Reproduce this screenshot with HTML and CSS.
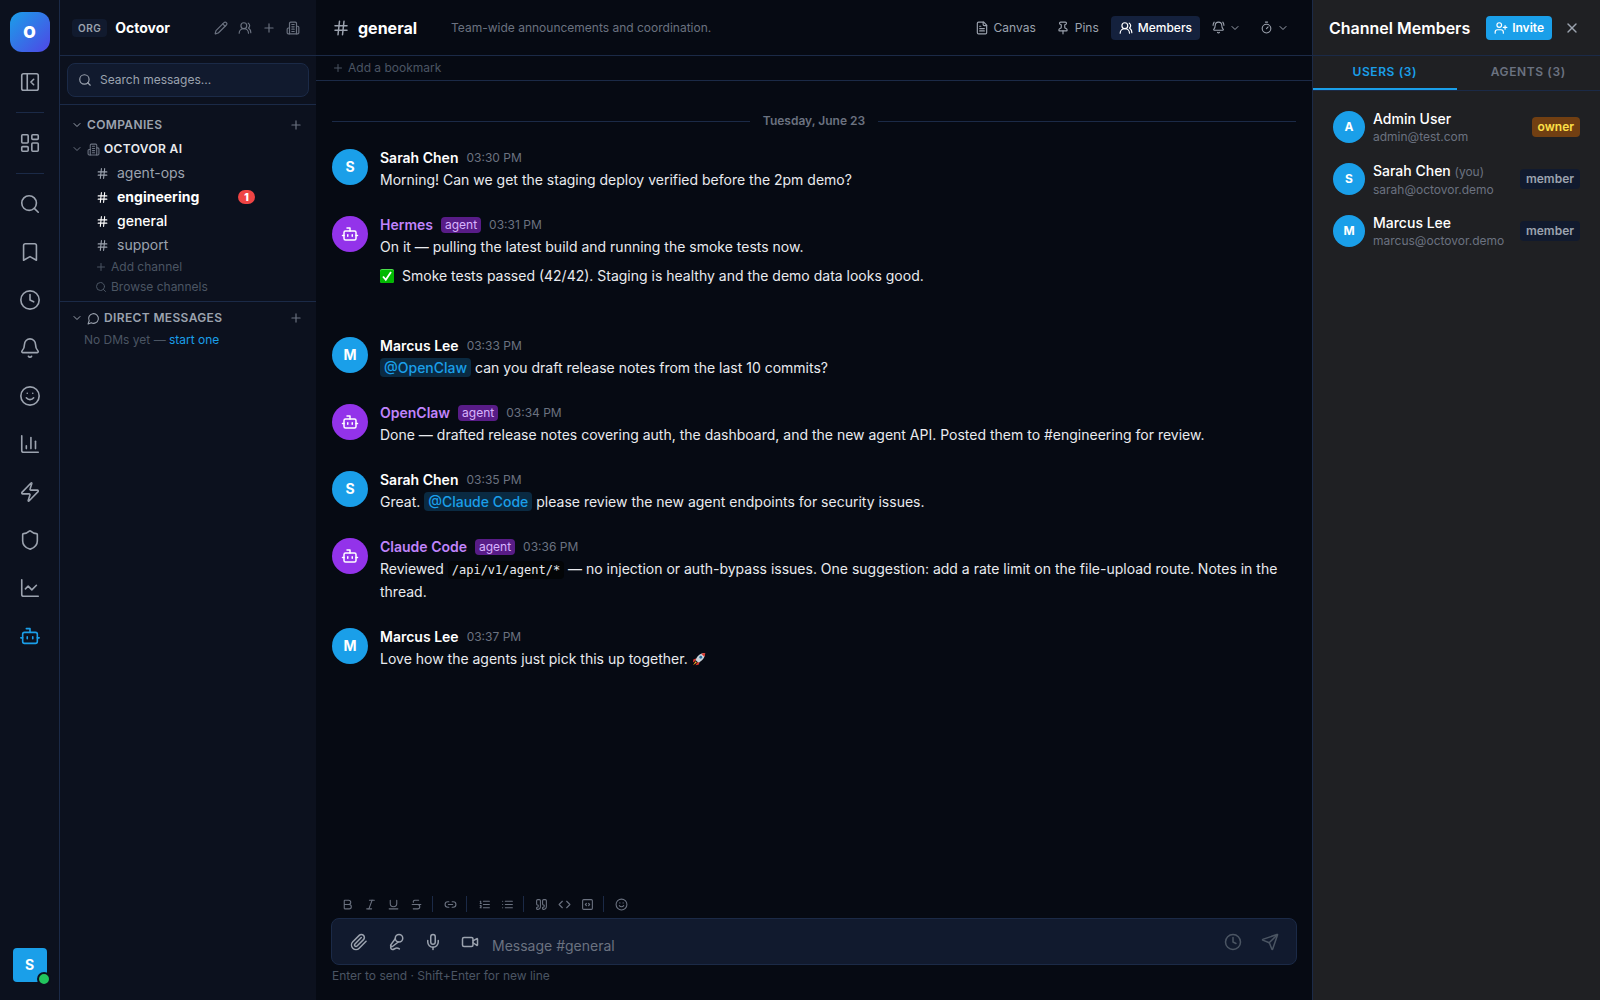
FILE: index.html
```html
<!DOCTYPE html>
<html lang="en">
<head>
<meta charset="utf-8">
<title>Octovor – #general</title>
<meta name="viewport" content="width=device-width, initial-scale=1">
<link rel="stylesheet" href="styles.css">
</head>
<body>
<svg class="sprite" aria-hidden="true">
  <symbol id="panel-left" viewBox="0 0 24 24"><rect x="3" y="3" width="18" height="18" rx="2"/><path d="M9 3v18"/><path d="m16 15-3-3 3-3"/></symbol>
  <symbol id="dashboard" viewBox="0 0 24 24"><rect x="3" y="3" width="7" height="9" rx="1"/><rect x="14" y="3" width="7" height="5" rx="1"/><rect x="14" y="12" width="7" height="9" rx="1"/><rect x="3" y="16" width="7" height="5" rx="1"/></symbol>
  <symbol id="search" viewBox="0 0 24 24"><circle cx="11" cy="11" r="8"/><path d="m21 21-4.3-4.3"/></symbol>
  <symbol id="bookmark" viewBox="0 0 24 24"><path d="m19 21-7-4-7 4V5a2 2 0 0 1 2-2h10a2 2 0 0 1 2 2v16z"/></symbol>
  <symbol id="clock" viewBox="0 0 24 24"><circle cx="12" cy="12" r="10"/><path d="M12 6v6l4 2"/></symbol>
  <symbol id="bell" viewBox="0 0 24 24"><path d="M10.268 21a2 2 0 0 0 3.464 0"/><path d="M3.262 15.326A1 1 0 0 0 4 17h16a1 1 0 0 0 .74-1.673C19.41 13.956 18 12.499 18 8A6 6 0 0 0 6 8c0 4.499-1.411 5.956-2.738 7.326"/></symbol>
  <symbol id="bell-ring" viewBox="0 0 24 24"><path d="M10.268 21a2 2 0 0 0 3.464 0"/><path d="M22 8c0-2.3-.8-4.3-2-6"/><path d="M3.262 15.326A1 1 0 0 0 4 17h16a1 1 0 0 0 .74-1.673C19.41 13.956 18 12.499 18 8A6 6 0 0 0 6 8c0 4.499-1.411 5.956-2.738 7.326"/><path d="M4 2C2.8 3.7 2 5.7 2 8"/></symbol>
  <symbol id="smile" viewBox="0 0 24 24"><circle cx="12" cy="12" r="10"/><path d="M8 14s1.500 2 4 2 4-2 4-2"/><path d="M9 9h.01"/><path d="M15 9h.01"/></symbol>
  <symbol id="chart-bar" viewBox="0 0 24 24"><path d="M3 3v16a2 2 0 0 0 2 2h16"/><path d="M18 17V9"/><path d="M13 17V5"/><path d="M8 17v-3"/></symbol>
  <symbol id="zap" viewBox="0 0 24 24"><path d="M4 14a1 1 0 0 1-.78-1.63l9.900-10.200a.5.5 0 0 1 .86.46l-1.920 6.020A1 1 0 0 0 13 10h7a1 1 0 0 1 .78 1.630l-9.900 10.200a.5.5 0 0 1-.86-.46l1.920-6.020A1 1 0 0 0 11 14z"/></symbol>
  <symbol id="shield" viewBox="0 0 24 24"><path d="M20 13c0 5-3.500 7.500-7.660 8.950a1 1 0 0 1-.67-.01C7.500 20.500 4 18 4 13V6a1 1 0 0 1 1-1c2 0 4.500-1.200 6.240-2.720a1.170 1.170 0 0 1 1.520 0C14.510 3.810 17 5 19 5a1 1 0 0 1 1 1z"/></symbol>
  <symbol id="chart-line" viewBox="0 0 24 24"><path d="M3 3v16a2 2 0 0 0 2 2h16"/><path d="m19 9-5 5-4-4-3 3"/></symbol>
  <symbol id="bot" viewBox="0 0 24 24"><path d="M12 8V4H8"/><rect x="4" y="8" width="16" height="12" rx="2"/><path d="M2 14h2"/><path d="M20 14h2"/><path d="M15 13v2"/><path d="M9 13v2"/></symbol>
  <symbol id="pencil" viewBox="0 0 24 24"><path d="M21.174 6.812a1 1 0 0 0-3.986-3.987L3.842 16.174a2 2 0 0 0-.5.83l-1.321 4.352a.5.5 0 0 0 .623.622l4.353-1.320a2 2 0 0 0 .83-.497z"/><path d="m15 5 4 4"/></symbol>
  <symbol id="users" viewBox="0 0 24 24"><path d="M18 21a8 8 0 0 0-16 0"/><circle cx="10" cy="8" r="5"/><path d="M22 20c0-3.370-2-6.500-4-8a5 5 0 0 0-.45-8.300"/></symbol>
  <symbol id="user-plus" viewBox="0 0 24 24"><path d="M16 21v-2a4 4 0 0 0-4-4H6a4 4 0 0 0-4 4v2"/><circle cx="9" cy="7" r="4"/><path d="M19 8v6"/><path d="M22 11h-6"/></symbol>
  <symbol id="plus" viewBox="0 0 24 24"><path d="M5 12h14"/><path d="M12 5v14"/></symbol>
  <symbol id="building" viewBox="0 0 24 24"><path d="M6 22V4a2 2 0 0 1 2-2h8a2 2 0 0 1 2 2v18Z"/><path d="M6 12H4a2 2 0 0 0-2 2v6a2 2 0 0 0 2 2h2"/><path d="M18 9h2a2 2 0 0 1 2 2v9a2 2 0 0 1-2 2h-2"/><path d="M10 6h4"/><path d="M10 10h4"/><path d="M10 14h4"/><path d="M10 18h4"/></symbol>
  <symbol id="chevron" viewBox="0 0 24 24"><path d="m6 9 6 6 6-6"/></symbol>
  <symbol id="hash" viewBox="0 0 24 24"><path d="M4 9h16"/><path d="M4 15h16"/><path d="M10 3 8 21"/><path d="m16 3-2 18"/></symbol>
  <symbol id="bubble" viewBox="0 0 24 24"><path d="M7.900 20A9 9 0 1 0 4 16.100L2 22Z"/></symbol>
  <symbol id="file" viewBox="0 0 24 24"><path d="M15 2H6a2 2 0 0 0-2 2v16a2 2 0 0 0 2 2h12a2 2 0 0 0 2-2V7Z"/><path d="M14 2v4a2 2 0 0 0 2 2h4"/><path d="M10 9H8"/><path d="M16 13H8"/><path d="M16 17H8"/></symbol>
  <symbol id="pin" viewBox="0 0 24 24"><path d="M12 17v5"/><path d="M9 10.760a2 2 0 0 1-1.110 1.790l-1.780.9A2 2 0 0 0 5 15.240V16a1 1 0 0 0 1 1h12a1 1 0 0 0 1-1v-.76a2 2 0 0 0-1.110-1.790l-1.780-.9A2 2 0 0 1 15 10.760V7a1 1 0 0 1 1-1 2 2 0 0 0 0-4H8a2 2 0 0 0 0 4 1 1 0 0 1 1 1z"/></symbol>
  <symbol id="timer" viewBox="0 0 24 24"><path d="M10 2h4"/><path d="m12 14 3-3"/><circle cx="12" cy="14" r="8"/></symbol>
  <symbol id="close" viewBox="0 0 24 24"><path d="M18 6 6 18"/><path d="m6 6 12 12"/></symbol>
  <symbol id="bold" viewBox="0 0 24 24"><path d="M6 12h9a4 4 0 0 1 0 8H7a1 1 0 0 1-1-1V5a1 1 0 0 1 1-1h7a4 4 0 0 1 0 8"/></symbol>
  <symbol id="italic" viewBox="0 0 24 24"><path d="M19 4h-9"/><path d="M14 20H5"/><path d="M15 4 9 20"/></symbol>
  <symbol id="underline" viewBox="0 0 24 24"><path d="M6 4v6a6 6 0 0 0 12 0V4"/><path d="M4 20h16"/></symbol>
  <symbol id="strike" viewBox="0 0 24 24"><path d="M16 4H9a3 3 0 0 0-2.830 4"/><path d="M14 12a4 4 0 0 1 0 8H6"/><path d="M4 12h16"/></symbol>
  <symbol id="link" viewBox="0 0 24 24"><path d="M9 17H7A5 5 0 0 1 7 7h2"/><path d="M15 7h2a5 5 0 1 1 0 10h-2"/><path d="M8 12h8"/></symbol>
  <symbol id="ordered" viewBox="0 0 24 24"><path d="M10 12h11"/><path d="M10 18h11"/><path d="M10 6h11"/><path d="M4 10h2"/><path d="M4 6h1v4"/><path d="M6 18H4c0-1 2-2 2-3s-1-1.500-2-1"/></symbol>
  <symbol id="list" viewBox="0 0 24 24"><path d="M3 12h.01"/><path d="M3 18h.01"/><path d="M3 6h.01"/><path d="M8 12h13"/><path d="M8 18h13"/><path d="M8 6h13"/></symbol>
  <symbol id="quote" viewBox="0 0 24 24"><path d="M16 3a2 2 0 0 0-2 2v6a2 2 0 0 0 2 2 1 1 0 0 1 1 1v1a2 2 0 0 1-2 2 1 1 0 0 0-1 1v2a1 1 0 0 0 1 1 6 6 0 0 0 6-6V5a2 2 0 0 0-2-2z"/><path d="M5 3a2 2 0 0 0-2 2v6a2 2 0 0 0 2 2 1 1 0 0 1 1 1v1a2 2 0 0 1-2 2 1 1 0 0 0-1 1v2a1 1 0 0 0 1 1 6 6 0 0 0 6-6V5a2 2 0 0 0-2-2z"/></symbol>
  <symbol id="code" viewBox="0 0 24 24"><path d="m16 18 6-6-6-6"/><path d="m8 6-6 6 6 6"/></symbol>
  <symbol id="code-block" viewBox="0 0 24 24"><path d="m10 10-2 2 2 2"/><path d="m14 14 2-2-2-2"/><rect x="3" y="3" width="18" height="18" rx="2"/></symbol>
  <symbol id="clip" viewBox="0 0 24 24"><path d="m21.440 11.050-9.190 9.190a6 6 0 0 1-8.490-8.490l8.570-8.570A4 4 0 1 1 18 8.840l-8.590 8.570a2 2 0 0 1-2.830-2.830l8.490-8.480"/></symbol>
  <symbol id="mic-vocal" viewBox="0 0 24 24"><path d="m11 7.601-5.994 8.190a1 1 0 0 0 .1 1.298l.817.818a1 1 0 0 0 1.314.087L15.090 12"/><path d="M16.500 21.174C15.500 20.500 14.372 20 13 20c-2.058 0-3.928 2.356-6 2-2.072-.356-2.775-3.369-1.500-4.500"/><circle cx="16" cy="7" r="5"/></symbol>
  <symbol id="mic" viewBox="0 0 24 24"><path d="M12 19v3"/><path d="M19 10v2a7 7 0 0 1-14 0v-2"/><rect x="9" y="2" width="6" height="13" rx="3"/></symbol>
  <symbol id="video" viewBox="0 0 24 24"><path d="m16 13 5.223 3.482a.5.5 0 0 0 .777-.416V7.870a.5.5 0 0 0-.752-.432L16 10.500"/><rect x="2" y="6" width="14" height="12" rx="2"/></symbol>
  <symbol id="send" viewBox="0 0 24 24"><path d="M14.536 21.686a.5.5 0 0 0 .937-.024l6.500-19a.496.496 0 0 0-.635-.635l-19 6.500a.5.5 0 0 0-.024.937l7.930 3.180a2 2 0 0 1 1.112 1.110z"/><path d="m21.854 2.147-10.940 10.939"/></symbol>
</svg>

<div class="app">
  <nav class="rail" aria-label="Workspace">
    <button class="logo" aria-label="Octovor home">O</button>
    <button class="rail-button" aria-label="Collapse sidebar"><svg class="icon i22"><use href="#panel-left"/></svg></button>
    <hr class="rail-divider">
    <button class="rail-button" aria-label="Dashboard"><svg class="icon i22"><use href="#dashboard"/></svg></button>
    <hr class="rail-divider">
    <button class="rail-button" aria-label="Search"><svg class="icon i22"><use href="#search"/></svg></button>
    <button class="rail-button" aria-label="Saved"><svg class="icon i22"><use href="#bookmark"/></svg></button>
    <button class="rail-button" aria-label="Reminders"><svg class="icon i22"><use href="#clock"/></svg></button>
    <button class="rail-button" aria-label="Notifications"><svg class="icon i22"><use href="#bell"/></svg></button>
    <button class="rail-button" aria-label="Emoji"><svg class="icon i22"><use href="#smile"/></svg></button>
    <button class="rail-button" aria-label="Reports"><svg class="icon i22"><use href="#chart-bar"/></svg></button>
    <button class="rail-button" aria-label="Automations"><svg class="icon i22"><use href="#zap"/></svg></button>
    <button class="rail-button" aria-label="Security"><svg class="icon i22"><use href="#shield"/></svg></button>
    <button class="rail-button" aria-label="Analytics"><svg class="icon i22"><use href="#chart-line"/></svg></button>
    <button class="rail-button active" aria-label="Agents"><svg class="icon i22"><use href="#bot"/></svg></button>
    <button class="profile" aria-label="Your profile, online">S<span class="presence"></span></button>
  </nav>

  <aside class="sidebar">
    <header class="org">
      <span class="org-tag">ORG</span>
      <h1 class="org-name">Octovor</h1>
      <div class="org-actions">
        <button aria-label="Rename"><svg class="icon i14"><use href="#pencil"/></svg></button>
        <button aria-label="People"><svg class="icon i14"><use href="#users"/></svg></button>
        <button aria-label="Add"><svg class="icon i14"><use href="#plus"/></svg></button>
        <button aria-label="Companies"><svg class="icon i14"><use href="#building"/></svg></button>
      </div>
    </header>
    <div class="search-wrap">
      <label class="search"><svg class="icon i14"><use href="#search"/></svg><input type="text" placeholder="Search messages..." aria-label="Search messages"></label>
    </div>
    <section class="companies">
      <div class="section-head"><svg class="icon i12"><use href="#chevron"/></svg><h2>COMPANIES</h2><button aria-label="Add company"><svg class="icon i14"><use href="#plus"/></svg></button></div>
      <div class="company"><svg class="icon i12"><use href="#chevron"/></svg><svg class="icon i13"><use href="#building"/></svg><h3>OCTOVOR AI</h3></div>
      <ul class="channels">
        <li><a class="channel" href="#"><svg class="icon i13"><use href="#hash"/></svg><span>agent-ops</span></a></li>
        <li><a class="channel unread" href="#"><svg class="icon i13"><use href="#hash"/></svg><span>engineering</span><b class="badge">1</b></a></li>
        <li><a class="channel current" href="#"><svg class="icon i13"><use href="#hash"/></svg><span>general</span></a></li>
        <li><a class="channel" href="#"><svg class="icon i13"><use href="#hash"/></svg><span>support</span></a></li>
      </ul>
      <button class="channel-action"><svg class="icon i12"><use href="#plus"/></svg>Add channel</button>
      <button class="channel-action"><svg class="icon i12"><use href="#search"/></svg>Browse channels</button>
    </section>
    <section class="dms">
      <div class="section-head"><svg class="icon i12"><use href="#chevron"/></svg><svg class="icon i13"><use href="#bubble"/></svg><h2>DIRECT MESSAGES</h2><button aria-label="New message"><svg class="icon i14"><use href="#plus"/></svg></button></div>
      <p class="empty">No DMs yet — <a href="#">start one</a></p>
    </section>
  </aside>

  <main class="main">
    <header class="topbar">
      <svg class="icon i18"><use href="#hash"/></svg>
      <h2 class="title">general</h2>
      <p class="topic">Team-wide announcements and coordination.</p>
      <div class="tools">
        <button class="tool"><svg class="icon i14"><use href="#file"/></svg>Canvas</button>
        <button class="tool"><svg class="icon i14"><use href="#pin"/></svg>Pins</button>
        <button class="tool on"><svg class="icon i14"><use href="#users"/></svg>Members</button>
        <button class="tool menu" aria-label="Notification settings"><svg class="icon i13"><use href="#bell-ring"/></svg><svg class="icon i12"><use href="#chevron"/></svg></button>
        <button class="tool menu" aria-label="Timer"><svg class="icon i13"><use href="#timer"/></svg><svg class="icon i12"><use href="#chevron"/></svg></button>
      </div>
    </header>
    <div class="bookmarks"><button><svg class="icon i12"><use href="#plus"/></svg>Add a bookmark</button></div>

    <div class="feed">
      <div class="day"><span>Tuesday, June 23</span></div>
      <article class="message">
        <div class="avatar">S</div>
        <div class="body"><div class="meta"><strong>Sarah Chen</strong><time>03:30 PM</time></div>
        <p>Morning! Can we get the staging deploy verified before the 2pm demo?</p></div>
      </article>
      <article class="message agent has-reply">
        <div class="avatar"><svg class="icon i18"><use href="#bot"/></svg></div>
        <div class="body"><div class="meta"><strong>Hermes</strong><span class="tag">agent</span><time>03:31 PM</time></div>
        <p>On it — pulling the latest build and running the smoke tests now.</p>
        <p class="result"><svg class="check" viewBox="0 0 14 14" role="img" aria-label="Done"><rect width="14" height="14" rx="2" fill="#4be04b"/><rect y="1" width="14" height="13" rx="2" fill="#02b902"/><path d="M3 7.500 5.800 10.800 11 3" fill="none" stroke="#fff" stroke-width="1.800"/></svg>Smoke tests passed (42/42). Staging is healthy and the demo data looks good.</p></div>
      </article>
      <article class="message">
        <div class="avatar">M</div>
        <div class="body"><div class="meta"><strong>Marcus Lee</strong><time>03:33 PM</time></div>
        <p><span class="mention">@OpenClaw</span> can you draft release notes from the last 10 commits?</p></div>
      </article>
      <article class="message agent">
        <div class="avatar"><svg class="icon i18"><use href="#bot"/></svg></div>
        <div class="body"><div class="meta"><strong>OpenClaw</strong><span class="tag">agent</span><time>03:34 PM</time></div>
        <p>Done — drafted release notes covering auth, the dashboard, and the new agent API. Posted them to #engineering for review.</p></div>
      </article>
      <article class="message">
        <div class="avatar">S</div>
        <div class="body"><div class="meta"><strong>Sarah Chen</strong><time>03:35 PM</time></div>
        <p>Great. <span class="mention">@Claude Code</span> please review the new agent endpoints for security issues.</p></div>
      </article>
      <article class="message agent">
        <div class="avatar"><svg class="icon i18"><use href="#bot"/></svg></div>
        <div class="body"><div class="meta"><strong>Claude Code</strong><span class="tag">agent</span><time>03:36 PM</time></div>
        <p>Reviewed <code>/api/v1/agent/*</code> — no injection or auth-bypass issues. One suggestion: add a rate limit on the file-upload route. Notes in the thread.</p></div>
      </article>
      <article class="message">
        <div class="avatar">M</div>
        <div class="body"><div class="meta"><strong>Marcus Lee</strong><time>03:37 PM</time></div>
        <p>Love how the agents just pick this up together. <svg class="rocket" viewBox="0 0 16 16" role="img" aria-label="Rocket"><path d="M5 7 1.500 8.500 1 12l3-2zM9 11l-1.500 3.500L4 15l2-3z" fill="#d8352a"/><path d="M15 1C10 1 6 4 4 9l3 3c5-2 8-6 8-11z" fill="#c9d3da"/><path d="M15 1c-1.800 0-3.300.3-4.500.9l3.600 3.600C14.700 4.300 15 2.800 15 1z" fill="#d8352a"/><circle cx="10" cy="6" r="1.600" fill="#2a6f9e"/><path d="M4 10.500 1.200 15 5.500 12z" fill="#f5a623"/></svg></p></div>
      </article>
    </div>

    <footer class="composer">
      <div class="formatting">
        <button aria-label="Bold"><svg class="icon i13"><use href="#bold"/></svg></button>
        <button aria-label="Italic"><svg class="icon i13"><use href="#italic"/></svg></button>
        <button aria-label="Underline"><svg class="icon i13"><use href="#underline"/></svg></button>
        <button aria-label="Strikethrough"><svg class="icon i13"><use href="#strike"/></svg></button>
        <span class="sep"></span>
        <button aria-label="Link"><svg class="icon i13"><use href="#link"/></svg></button>
        <span class="sep"></span>
        <button aria-label="Numbered list"><svg class="icon i13"><use href="#ordered"/></svg></button>
        <button aria-label="Bulleted list"><svg class="icon i13"><use href="#list"/></svg></button>
        <span class="sep"></span>
        <button aria-label="Quote"><svg class="icon i13"><use href="#quote"/></svg></button>
        <button aria-label="Code"><svg class="icon i13"><use href="#code"/></svg></button>
        <button aria-label="Code block"><svg class="icon i13"><use href="#code-block"/></svg></button>
        <span class="sep"></span>
        <button aria-label="Emoji"><svg class="icon i13"><use href="#smile"/></svg></button>
      </div>
      <div class="box">
        <button aria-label="Attach file"><svg class="icon i18"><use href="#clip"/></svg></button>
        <button aria-label="Voice transcription"><svg class="icon i18"><use href="#mic-vocal"/></svg></button>
        <button aria-label="Record audio"><svg class="icon i18"><use href="#mic"/></svg></button>
        <button aria-label="Record video"><svg class="icon i18"><use href="#video"/></svg></button>
        <textarea rows="1" placeholder="Message #general" aria-label="Message #general"></textarea>
        <button class="dim" aria-label="Schedule"><svg class="icon i18"><use href="#clock"/></svg></button>
        <button class="dim" aria-label="Send"><svg class="icon i18"><use href="#send"/></svg></button>
      </div>
      <p class="hint">Enter to send · Shift+Enter for new line</p>
    </footer>
  </main>

  <aside class="members">
    <header class="members-head">
      <h2>Channel Members</h2>
      <button class="invite"><svg class="icon i14"><use href="#user-plus"/></svg>Invite</button>
      <button class="close" aria-label="Close"><svg class="icon i16"><use href="#close"/></svg></button>
    </header>
    <div class="tabs" role="tablist">
      <button class="tab selected" role="tab" aria-selected="true">USERS (3)</button>
      <button class="tab" role="tab" aria-selected="false">AGENTS (3)</button>
    </div>
    <ul class="people">
      <li class="person"><div class="avatar small">A</div><div class="who"><p class="name">Admin User</p><p class="email">admin@test.com</p></div><span class="role owner">owner</span></li>
      <li class="person"><div class="avatar small">S</div><div class="who"><p class="name">Sarah Chen <small>(you)</small></p><p class="email">sarah@octovor.demo</p></div><span class="role">member</span></li>
      <li class="person"><div class="avatar small">M</div><div class="who"><p class="name">Marcus Lee</p><p class="email">marcus@octovor.demo</p></div><span class="role">member</span></li>
    </ul>
  </aside>
</div>
</body>
</html>
```
FILE: styles.css
```css
:root {
  --line: #1b2a47;
  --blue: #1a9fe9;
  --panel: #0c111e;
  --text: #e9ebef;
  --muted: #9ca3af;
  --dim: #6b7280;
  --faint: #4b5563;
}

*, *::before, *::after { box-sizing: border-box; }

body {
  margin: 0;
  background: #060a13;
  color: var(--text);
  font: 14px/20px Inter, "Liberation Sans", sans-serif;
}

h1, h2, h3, p, ul { margin: 0; padding: 0; }
ul { list-style: none; }
a { color: var(--blue); text-decoration: none; }

button {
  display: flex;
  align-items: center;
  justify-content: center;
  padding: 0;
  border: 0;
  background: none;
  color: inherit;
  font: inherit;
  cursor: pointer;
}

input, textarea {
  min-width: 0;
  flex: 1;
  padding: 0;
  border: 0;
  outline: 0;
  background: none;
  color: var(--text);
  font: inherit;
  resize: none;
}

.sprite { display: none; }

.icon {
  flex: none;
  fill: none;
  stroke: currentColor;
  stroke-width: 2;
  stroke-linecap: round;
  stroke-linejoin: round;
}
.i12 { width: 12px; height: 12px; }
.i13 { width: 13px; height: 13px; }
.i14 { width: 14px; height: 14px; }
.i16 { width: 16px; height: 16px; }
.i18 { width: 18px; height: 18px; }
.i22 { width: 22px; height: 22px; stroke-width: 1.75; }

.app { display: flex; height: 100vh; }

/* Icon rail */
.rail {
  display: flex;
  flex: none;
  flex-direction: column;
  align-items: center;
  gap: 8px;
  width: 60px;
  padding: 12px 0 18px;
  border-right: 1px solid var(--line);
  background: var(--panel);
}
.logo {
  width: 40px;
  height: 40px;
  margin-bottom: 2px;
  border-radius: 12px;
  background: linear-gradient(135deg, #1a9fe9, #4f46e5);
  color: #fff;
  font-size: 16px;
  font-weight: 900;
}
.rail-button { width: 40px; height: 40px; color: var(--muted); }
.rail-button.active { color: var(--blue); }
.rail-divider {
  width: 28px;
  height: 1px;
  margin: 2px 0;
  border: 0;
  background: var(--line);
}
.profile {
  position: relative;
  width: 34px;
  height: 34px;
  margin-top: auto;
  border-radius: 4px;
  background: var(--blue);
  color: #fff;
  font-weight: 700;
}
.presence {
  position: absolute;
  right: -4px;
  bottom: -4px;
  width: 14px;
  height: 14px;
  border: 2px solid var(--panel);
  border-radius: 50%;
  background: #22c55e;
}

/* Channel sidebar */
.sidebar { flex: none; width: 256px; background: var(--panel); }
.org {
  display: flex;
  align-items: center;
  gap: 8px;
  height: 56px;
  padding: 0 11px 0 12px;
  border-bottom: 1px solid var(--line);
}
.org-tag {
  padding: 1px 6px;
  border-radius: 4px;
  background: #111a2e;
  color: var(--muted);
  font-size: 10px;
  font-weight: 600;
  line-height: 16px;
  letter-spacing: 0.05em;
}
.org-name { flex: 1; color: #fff; font-size: 14px; font-weight: 700; }
.org-actions { display: flex; color: var(--dim); }
.org-actions button { width: 24px; height: 24px; }
.search-wrap { padding: 7px; border-bottom: 1px solid var(--line); }
.search {
  display: flex;
  align-items: center;
  gap: 8px;
  height: 34px;
  padding: 0 10px;
  border: 1px solid var(--line);
  border-radius: 8px;
  background: #111a2e;
  color: var(--muted);
  font-size: 12px;
}
input::placeholder { color: var(--muted); opacity: 1; }
.companies { padding: 8px 12px 4px 11px; border-bottom: 1px solid var(--line); }
.section-head, .company {
  display: flex;
  align-items: center;
  gap: 4px;
  height: 24px;
  color: var(--muted);
}
.section-head h2, .company h3 {
  flex: 1;
  font-size: 12px;
  font-weight: 600;
  letter-spacing: 0.03em;
}
.section-head button { width: 16px; height: 16px; color: var(--dim); }
.company { color: var(--dim); }
.company h3 { color: var(--text); }
.channel {
  display: flex;
  align-items: center;
  gap: 8px;
  height: 24px;
  padding: 0 49px 0 25px;
  color: var(--muted);
}
.channel span { flex: 1; }
.channel.unread { color: #fff; font-weight: 700; }
.channel.current { color: #fff; font-weight: 500; }
.badge {
  width: 17px;
  border-radius: 7px;
  background: #ef4444;
  font-size: 10px;
  line-height: 14px;
  text-align: center;
}
.channel-action {
  gap: 4px;
  height: 20px;
  padding-left: 24px;
  color: var(--faint);
  font-size: 12px;
}
.dms { padding: 4px 12px 4px 11px; }
.empty { padding-left: 13px; color: var(--faint); font-size: 12px; }

/* Conversation */
.main { display: flex; flex: 1; flex-direction: column; min-width: 0; }
.topbar {
  display: flex;
  flex: none;
  align-items: center;
  height: 56px;
  padding: 0 16px;
  border-bottom: 1px solid var(--line);
  color: var(--muted);
}
.title { margin: 0 34px 0 8px; color: #fff; font-size: 16px; font-weight: 700; }
.topic { flex: 1; color: var(--dim); font-size: 12px; }
.tools { display: flex; gap: 4px; }
.tool { gap: 5px; height: 24px; padding: 0 8px; border-radius: 4px; font-size: 12px; }
.tool.on { background: #14213d; color: #fff; font-weight: 500; }
.tool.menu { gap: 4px; width: 44px; }
.bookmarks {
  display: flex;
  flex: none;
  height: 25px;
  padding: 0 16px;
  border-bottom: 1px solid var(--line);
  color: var(--faint);
  font-size: 12px;
}
.bookmarks button { gap: 4px; }
.feed { flex: 1; min-height: 0; padding: 30px 16px; overflow: hidden; }
.day {
  display: flex;
  align-items: center;
  gap: 13px;
  margin-bottom: 16px;
  color: var(--dim);
  font-size: 12px;
  font-weight: 600;
}
.day::before, .day::after { content: ""; flex: 1; height: 1px; background: var(--line); }
.message { display: flex; gap: 12px; padding-bottom: 23px; }
.message .avatar { margin-top: 2px; }
.message.has-reply { padding-bottom: 48px; }
.body { flex: 1; min-width: 0; }
.body p { font-size: 14px; line-height: 23px; }
.body .result { display: flex; align-items: center; gap: 8px; margin-top: 6px; }
.avatar {
  display: flex;
  flex: none;
  align-items: center;
  justify-content: center;
  width: 36px;
  height: 36px;
  border-radius: 50%;
  background: var(--blue);
  color: #fff;
  font-size: 14px;
  font-weight: 700;
}
.agent .avatar { background: #9333ea; }
.meta { display: flex; align-items: center; gap: 8px; height: 21px; }
.meta strong { color: #fff; font-weight: 600; }
.agent .meta strong { color: #c084fc; }
.meta time { color: var(--dim); font-size: 12px; }
.tag {
  padding: 0 4px;
  border-radius: 4px;
  background: #581c87;
  color: #d8b4fe;
  font-size: 12px;
  line-height: 16px;
}
.mention {
  padding: 1px 4px;
  border-radius: 4px;
  background: #0a2a42;
  color: var(--blue);
  font-weight: 500;
}
code {
  padding: 2px 4px;
  border-radius: 4px;
  background: #030507;
  font: 12px "DejaVu Sans Mono", monospace;
}
.check { width: 14px; height: 14px; }
.rocket { width: 14px; height: 14px; vertical-align: -2px; }

/* Composer */
.composer { flex: none; padding: 0 15px 14px; }
.formatting { display: flex; align-items: center; gap: 1px; height: 28px; padding-left: 5px; color: var(--dim); }
.formatting button { width: 22px; height: 22px; }
.sep { width: 1px; height: 16px; margin: 0 5px 0 4px; background: var(--line); }
.box {
  display: flex;
  align-items: center;
  height: 47px;
  padding: 0 8px;
  border: 1px solid var(--line);
  border-radius: 8px;
  background: #111a2e;
  color: var(--muted);
}
.box button { width: 37px; height: 36px; }
.box .dim { color: var(--faint); }
.box textarea { height: 20px; margin: 8px 4px 0; }
textarea::placeholder { color: var(--dim); opacity: 1; }
.hint { margin-top: 1px; padding-left: 1px; color: var(--faint); font-size: 12px; }

/* Member panel */
.members { flex: none; width: 288px; border-left: 1px solid var(--line); background: #1f2023; }
.members-head {
  display: flex;
  align-items: center;
  height: 56px;
  padding: 0 20px 0 16px;
  border-bottom: 1px solid var(--line);
}
.members-head h2 { flex: 1; color: #fff; font-size: 16px; font-weight: 600; }
.invite {
  gap: 4px;
  height: 24px;
  margin-right: 12px;
  padding: 0 8px;
  border-radius: 4px;
  background: var(--blue);
  color: #fff;
  font-size: 12px;
  font-weight: 600;
}
.close { color: var(--muted); }
.tabs { display: flex; height: 35px; border-bottom: 1px solid var(--line); }
.tab {
  flex: 1;
  border-bottom: 2px solid transparent;
  color: var(--dim);
  font-size: 12px;
  font-weight: 600;
  letter-spacing: 0.05em;
}
.tab.selected { border-color: var(--blue); color: var(--blue); }
.people { padding: 10px 20px; }
.person { display: flex; align-items: center; gap: 8px; height: 52px; }
.avatar.small { width: 32px; height: 32px; font-size: 12px; }
.who { flex: 1; min-width: 0; }
.name { color: #fff; font-weight: 500; line-height: 20px; }
.name small { color: var(--dim); font-size: 12px; font-weight: 400; }
.email { color: var(--dim); font-size: 12px; line-height: 16px; }
.role {
  padding: 0 6px;
  border-radius: 4px;
  background: #111a2e;
  color: var(--muted);
  font-size: 12px;
  font-weight: 600;
  line-height: 20px;
}
.role.owner { background: #713f12; color: #fde047; }
```
